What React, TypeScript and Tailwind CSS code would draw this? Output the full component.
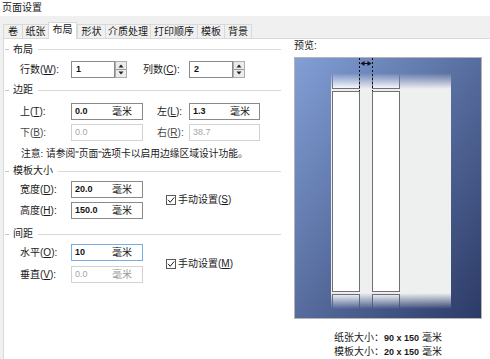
import React from "react";

const U = ({ c }: { c: string }) => <span className="underline underline-offset-[1px]">{c}</span>;

function Header({ title, className }: { title: string; className: string }) {
  return (
    <div className={"flex items-center " + className}>
      <div className="ml-[1px] w-[4px] h-px bg-[#c4c4c4]" />
      <span className="ml-[4px] text-[10px] leading-none text-[#1a1a1a]">{title}</span>
      <div className="ml-[5px] flex-1 h-px bg-[#d9d9d9]" />
    </div>
  );
}

function Spin({ value }: { value: string }) {
  return (
    <div className="flex items-center">
      <div className="w-[44px] h-[17px] border border-[#8a8a8a] bg-white flex items-center pl-[4px] text-[9px] font-bold text-[#111]">
        {value}
      </div>
      <svg width="12" height="17" className="block">
        <rect x="0.5" y="0.5" width="11" height="16" fill="#ececec" stroke="#adadad" />
        <line x1="1" y1="8.5" x2="11" y2="8.5" stroke="#9a9a9a" />
        <path d="M3.5 6.5 L6 3.5 L8.5 6.5Z" fill="#222" />
        <path d="M3.5 10.5 L6 13.5 L8.5 10.5Z" fill="#222" />
      </svg>
    </div>
  );
}

function Field({
  value,
  unit,
  disabled,
  focused,
  wide,
}: {
  value: string;
  unit?: boolean;
  disabled?: boolean;
  focused?: boolean;
  wide?: boolean;
}) {
  const border = disabled ? "border-[#d2d2d2]" : focused ? "border-[#78aee8]" : "border-[#8a8a8a]";
  return (
    <div className={"h-[17px] border bg-white flex items-center pl-[3px] " + border + (wide ? " w-[72px]" : " w-[71px]")}>
      <span
        className={
          "w-[37px] text-[9px] leading-none " + (disabled ? "text-[#a6a6a6]" : "font-bold text-[#111]")
        }
      >
        {value}
      </span>
      {unit && (
        <span className={"text-[10px] leading-none " + (disabled ? "text-[#9a9a9a]" : "text-[#1a1a1a]")}>毫米</span>
      )}
    </div>
  );
}

function Check({ children }: { children: React.ReactNode }) {
  return (
    <div className="flex items-center">
      <svg width="10" height="10" className="block">
        <rect x="0.5" y="0.5" width="9" height="9" fill="white" stroke="#5a5a5a" />
        <path d="M2 4.8 L4.2 7.3 L8.2 2.4" stroke="#222" fill="none" strokeWidth="1" />
      </svg>
      <span className="ml-[2px] text-[10px] leading-none">{children}</span>
    </div>
  );
}

const tabs: { t: string; w: string; sel?: boolean }[] = [
  { t: "卷", w: "w-[19px]" },
  { t: "纸张", w: "w-[26px]" },
  { t: "布局", w: "w-[29px]", sel: true },
  { t: "形状", w: "w-[28px]" },
  { t: "介质处理", w: "w-[45px]" },
  { t: "打印顺序", w: "w-[47px]" },
  { t: "模板", w: "w-[27px]" },
  { t: "背景", w: "w-[28px]" },
];

function Preview() {
  return (
    <svg width="186" height="260" className="block">
      <defs>
        <linearGradient id="bg" x1="0" y1="0" x2="1" y2="1">
          <stop offset="0" stopColor="#829fd6" />
          <stop offset="1" stopColor="#2c3a66" />
        </linearGradient>
        <linearGradient id="fade" gradientUnits="userSpaceOnUse" x1="0" y1="15" x2="0" y2="251">
          <stop offset="0" stopColor="#000" />
          <stop offset="0.068" stopColor="#fff" />
          <stop offset="0.932" stopColor="#fff" />
          <stop offset="1" stopColor="#000" />
        </linearGradient>
        <mask id="pm" maskUnits="userSpaceOnUse" x="0" y="0" width="186" height="260">
          <rect x="0" y="0" width="186" height="260" fill="url(#fade)" />
        </mask>
      </defs>
      <rect width="186" height="260" fill="url(#bg)" />
      <g mask="url(#pm)">
        <rect x="36" y="15" width="120" height="236" fill="#eeefef" />
        <rect x="37.5" y="15.5" width="27" height="15" fill="#fff" stroke="#707070" />
        <rect x="77.5" y="15.5" width="27" height="15" fill="#fff" stroke="#707070" />
        <rect x="37.5" y="33.5" width="27" height="200" fill="#fff" stroke="#707070" />
        <rect x="77.5" y="33.5" width="27" height="200" fill="#fff" stroke="#707070" />
        <rect x="37.5" y="236.5" width="27" height="20" fill="#fff" stroke="#707070" />
        <rect x="77.5" y="236.5" width="27" height="20" fill="#fff" stroke="#707070" />
      </g>
      <line x1="64.5" y1="0" x2="64.5" y2="33" stroke="#111" strokeDasharray="2 2" />
      <line x1="77.5" y1="0" x2="77.5" y2="33" stroke="#111" strokeDasharray="2 2" />
      <line x1="68" y1="5.5" x2="74" y2="5.5" stroke="#111" />
      <path d="M65.5 5.5 L69.5 3 L69.5 8Z" fill="#111" />
      <path d="M76.5 5.5 L72.5 3 L72.5 8Z" fill="#111" />
    </svg>
  );
}

export default function App() {
  return (
    <div className="w-[490px] h-[359px] overflow-hidden bg-[#f0f0f0] flex flex-col text-[#1a1a1a] font-['Liberation_Sans','Noto_Sans_CJK_SC',sans-serif]">
      <div className="h-[18px] bg-white flex items-center pl-[2px] text-[10px] leading-none">页面设置</div>
      <div className="h-[24px] flex items-end pl-[3px]">
        {tabs.map((tb, i) =>
          tb.sel ? (
            <div
              key={i}
              className={
                "relative z-10 -mb-px h-[17px] bg-white border-x border-t border-[#d9d9d9] flex items-center justify-center pb-[2px] text-[10px] leading-none " +
                tb.w
              }
            >
              {tb.t}
            </div>
          ) : (
            <div
              key={i}
              className={
                "h-[14px] border-t border-l border-[#d9d9d9] flex items-center justify-center text-[10px] leading-none " +
                tb.w +
                (i === tabs.length - 1 ? " border-r" : "")
              }
            >
              {tb.t}
            </div>
          )
        )}
      </div>
      <div className="flex-1 ml-[3px] border-t border-l border-[#d9d9d9] bg-white flex">
        <div className="w-[277px] flex flex-col text-[10px] leading-none">
          <Header title="布局" className="h-[21px]" />
          <div className="mt-[1px] h-[17px] flex items-center pl-[16px]">
            <span className="w-[51px]">
              行数(<U c="W" />):
            </span>
            <Spin value="1" />
            <span className="ml-[16px] w-[46px]">
              列数(<U c="C" />):
            </span>
            <Spin value="2" />
          </div>

          <Header title="边距" className="mt-[2px] h-[20px]" />
          <div className="mt-[3px] h-[17px] flex items-center pl-[16px]">
            <span className="w-[51px]">
              上(<U c="T" />):
            </span>
            <Field value="0.0" unit wide />
            <span className="ml-[14px] w-[32px]">
              左(<U c="L" />):
            </span>
            <Field value="1.3" unit />
          </div>
          <div className="mt-[4px] h-[17px] flex items-center pl-[16px]">
            <span className="w-[51px] text-[#4a4a4a]">
              下(<U c="B" />):
            </span>
            <Field value="0.0" disabled wide />
            <span className="ml-[14px] w-[32px] text-[#4a4a4a]">
              右(<U c="R" />):
            </span>
            <Field value="38.7" disabled />
          </div>
          <div className="mt-[6px] h-[14px] flex items-center pl-[17px] text-[9.75px] whitespace-nowrap">
            注意: 请参阅"页面"选项卡以启用边缘区域设计功能。
          </div>

          <Header title="模板大小" className="mt-[1px] h-[18px]" />
          <div className="mt-[1px] flex items-center pl-[16px]">
            <div className="flex flex-col">
              <div className="h-[17px] flex items-center">
                <span className="w-[51px]">
                  宽度(<U c="D" />):
                </span>
                <Field value="20.0" unit wide />
              </div>
              <div className="mt-[4px] h-[17px] flex items-center">
                <span className="w-[51px]">
                  高度(<U c="H" />):
                </span>
                <Field value="150.0" unit wide />
              </div>
            </div>
            <div className="ml-[23px]">
              <Check>
                手动设置(<U c="S" />)
              </Check>
            </div>
          </div>

          <Header title="间距" className="mt-[5px] h-[20px]" />
          <div className="flex items-center pl-[16px]">
            <div className="flex flex-col">
              <div className="h-[17px] flex items-center">
                <span className="w-[51px]">
                  水平(<U c="O" />):
                </span>
                <Field value="10" unit wide focused />
              </div>
              <div className="mt-[5px] h-[17px] flex items-center">
                <span className="w-[51px]">
                  垂直(<U c="V" />):
                </span>
                <Field value="0.0" unit wide disabled />
              </div>
            </div>
            <div className="ml-[23px]">
              <Check>
                手动设置(<U c="M" />)
              </Check>
            </div>
          </div>
        </div>

        <div className="ml-[13px] w-[188px] flex flex-col text-[10px] leading-none">
          <div className="h-[14px] flex items-center">预览:</div>
          <div className="mt-[4px] h-[262px] w-[188px] border border-[#b4b4b4]">
            <Preview />
          </div>
          <div className="mt-[12px] h-[14px] flex items-center justify-center whitespace-nowrap">
            纸张大小：<span className="text-[9px] font-bold">90 x 150</span>&nbsp;毫米
          </div>
          <div className="h-[14px] flex items-center justify-center whitespace-nowrap">
            模板大小：<span className="text-[9px] font-bold">20 x 150</span>&nbsp;毫米
          </div>
        </div>
      </div>
    </div>
  );
}
